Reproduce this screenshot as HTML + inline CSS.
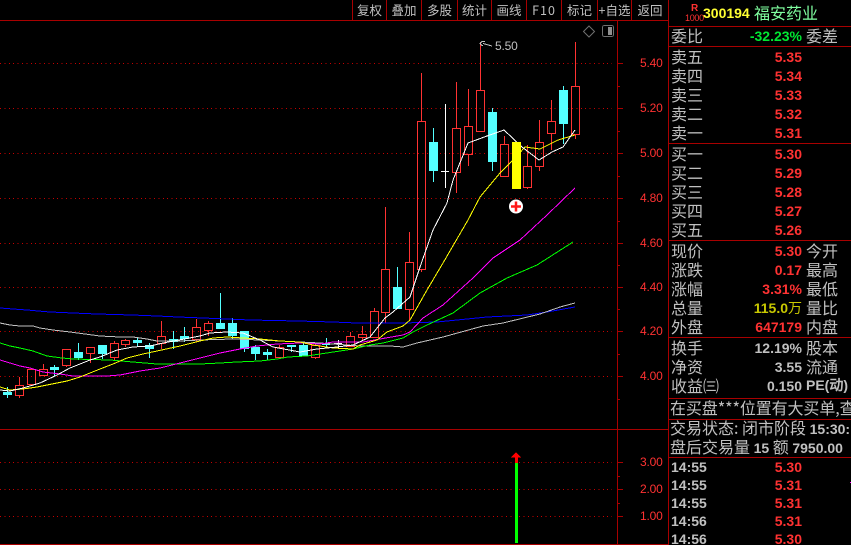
<!DOCTYPE html>
<html><head><meta charset="utf-8"><style>
html,body{margin:0;padding:0;background:#000;width:851px;height:545px;overflow:hidden}
#w{position:relative;width:851px;height:545px;overflow:hidden;font-family:"Liberation Sans","WenQuanYi Zen Hei","Noto Sans CJK SC",sans-serif;color:#c0c0c0}
svg{position:absolute;left:0;top:0}
.t{position:absolute;white-space:nowrap;line-height:20px}
.c{font-size:16px;font-family:"WenQuanYi Zen Hei","Noto Sans CJK SC",sans-serif;left:671px;margin-top:-1px}
.r{font-size:16px;font-family:"WenQuanYi Zen Hei","Noto Sans CJK SC",sans-serif;left:806px;margin-top:-1px}
.n{font-size:14px;font-weight:bold;right:49px;color:#ff3232}
.g{color:#c0c0c0}
.b{font-size:12.5px;font-family:"WenQuanYi Zen Hei","Noto Sans CJK SC",sans-serif;top:0;text-align:center}
.a{font-size:12px;color:#ff3232;left:640px;letter-spacing:-.2px}
.m{font-size:14px;font-weight:bold;left:671px}
</style></head><body><div id="w">
<svg width="851" height="545" viewBox="0 0 851 545" shape-rendering="crispEdges" fill="none">
<g stroke="#c80000" stroke-dasharray="1 3.400">
<path d="M0 63.5H612M0 108.5H612M0 153.5H612M0 198.5H612M0 243.5H612M0 287.5H612M0 331.5H612M0 376.5H612M0 462.5H612M0 489.5H612M0 516.5H612"/>
</g>
<g stroke="#a80000">
<path d="M0 20.5H668M0 429.5H668M0 544.5H668M617.5 20V545M668.5 0V545M668 26.5H851M668 46.5H851M668 143.5H851M668 240.5H851M668 337.5H851M668 398.5H851M668 419.5H851M668 457.5H851"/>
<path d="M352.5 0V20M386.5 0V20M421.5 0V20M457.5 0V20M491.5 0V20M526.5 0V20M561.5 0V20M597.5 0V20M631.5 0V20"/>
<path d="M617 63.5h6M617 108.5h6M617 153.5h6M617 198.5h6M617 243.5h6M617 287.5h6M617 331.5h6M617 376.5h6M617 86.5h3M617 131.5h3M617 176.5h3M617 221.5h3M617 265.5h3M617 309.5h3M617 354.5h3M617 399.5h3M617 462.5h6M617 489.5h6M617 516.5h6M617 476.5h3M617 503.5h3"/>
</g>
<!-- cyan candles -->
<g fill="#54ffff">
<rect x="3" y="392" width="9" height="3"/><rect x="50" y="367" width="9" height="3"/><rect x="74" y="352" width="9" height="6"/><rect x="98" y="345" width="9" height="9"/><rect x="133" y="340" width="9" height="3"/><rect x="145" y="345" width="9" height="4"/><rect x="169" y="339" width="9" height="3"/><rect x="180" y="336" width="9" height="3"/><rect x="216" y="323" width="9" height="6"/><rect x="228" y="323" width="9" height="13"/><rect x="240" y="331" width="9" height="18"/><rect x="251" y="347" width="9" height="7"/><rect x="263" y="352" width="9" height="3"/><rect x="287" y="345" width="9" height="2"/><rect x="299" y="345" width="9" height="11"/><rect x="322" y="343" width="8" height="2"/><rect x="393" y="287" width="9" height="22"/><rect x="429" y="142" width="9" height="29"/><rect x="488" y="112" width="9" height="50"/><rect x="559" y="90" width="9" height="34"/>
</g>
<path stroke="#54ffff" d="M7.5 387V398M54.5 365V376M78.5 343V360M102.5 345V359M137.5 338V347M149.5 343V358M173.5 331V349M184.5 327V342M220.5 293V329M232.5 318V339M244.5 331V352M255.5 345V360M267.5 349V360M291.5 345V352M303.5 343V356M326.5 338V348M397.5 267V309M433.5 128V182M492.5 108V171M563.5 86V144"/>
<!-- red candles -->
<path stroke="#ff3232" d="M15.5 385.5h8v10h-8zM19.5 377v8M19.5 396v2
M27.5 369.5h8v15h-8zM31.5 368v1M31.5 385v1
M39.5 369.5h8v6h-8zM43.5 364v5
M62.5 349.5h8v16h-8zM66.5 366v1
M86.5 347.5h8v6h-8zM90.5 354v9
M110.5 343.5h8v14h-8zM114.5 341v2M114.5 358v2
M121.5 340.5h8v4h-8zM125.5 339v1M125.5 345v2
M157.5 336.5h8v7h-8zM161.5 321v15M161.5 344v5
M192.5 327.5h8v12h-8zM196.5 319v8M196.5 340v2
M204.5 323.5h8v7h-8zM208.5 321v2M208.5 331v5
M275.5 347.5h8v10h-8zM279.5 345v2
M311.5 345.5h8v12h-8zM315.5 343v2M315.5 358v1
M346.5 336.5h8v10h-8zM350.5 332v4
M358.5 334.5h8v3h-8zM362.5 326v8M362.5 338v2
M370.5 311.5h8v26h-8zM374.5 308v3
M381.5 269.5h8v43h-8zM385.5 207v62M385.5 313v10
M405.5 262.5h8v47h-8zM409.5 232v30M409.5 310v10
M417.5 121.5h8v148h-8zM421.5 73v48M421.5 270v2
M452.5 128.5h8v44h-8zM456.5 82v46M456.5 173v20
M464.5 126.5h8v28h-8zM468.5 89v37M468.5 155v11
M476.5 90.5h8v41h-8zM480.5 42v48
M500.5 144.5h8v32h-8zM504.5 136v8
M523.5 166.5h8v21h-8zM527.5 145v21M527.5 188v1
M535.5 142.5h8v24h-8zM539.5 120v22M539.5 167v4
M547.5 121.5h8v12h-8zM551.5 100v21M551.5 134v16
M571.5 86.5h8v48h-8zM575.5 42v44M575.5 135v4"/>
<path stroke="#fff" d="M334 343.5h8M338.5 340v8M441 171.5h8M445.5 104v84"/>
<!-- moving averages -->
<polyline stroke="#0000ff" points="0,308 13,309 27,310 38,311 50,312 73,313 97,314 132,315 157,316 178,317 203,318 227,319 250,320 298,321 333,322 357,323 403,323 437,322 487,317 527,315 547,312 575,307"/>
<polyline stroke="#c0c0c0" points="0,323 10,325 20,326 33,326 40,328 53,330 70,332 85,334 100,336 120,337 133,337 147,339 157,341 180,341 200,340 233,339 260,340 300,342 320,343 360,346 390,346 403,347 417,343 443,337 483,326 503,323 540,314 560,307 575,303"/>
<polyline stroke="#00ff00" points="0,343 10,346 20,348 33,351 47,356 62,358 73,359 110,360 133,362 157,364 200,364 220,363 237,362 260,361 277,359 288,357 307,356 320,354 340,351 353,349 370,345 383,343 403,338 413,332 427,325 453,313 480,293 507,278 537,265 573,242"/>
<polyline stroke="#ff00ff" points="0,360 10,363 20,366 30,368 43,372 60,374 73,376 97,376 107,376 120,375 140,371 160,368 180,363 200,358 220,353 240,349 257,346 277,344 300,343 320,344 333,342 363,342 380,339 403,335 410,332 423,318 443,305 473,278 493,258 520,240 547,215 575,188"/>
<polyline stroke="#ffff00" points="0,387 10,390 23,389 37,387 52,384 67,381 80,377 100,369 113,364 127,358 143,354 157,351 180,346 200,341 213,338 227,337 260,339 280,341 300,342 313,345 333,348 353,349 360,345 377,340 387,332 403,326 410,320 427,290 443,263 468,220 480,197 500,173 513,160 525,147 540,149 558,140 575,135"/>
<polyline stroke="#ffffff" points="0,390 10,391 23,388 40,383 57,375 70,368 90,360 100,357 117,350 133,347 150,346 163,343 200,336 210,333 227,332 243,333 260,340 273,347 300,352 317,349 337,347 353,345 370,337 385,318 393,312 410,297 420,267 433,230 447,203 453,180 468,143 487,136 504,130 522,147 539,160 552,152 563,147 575,130"/>
<rect x="512" y="142" width="9" height="47" fill="#ffff00"/>
<!-- 5.50 marker -->
<path stroke="#c0c0c0" d="M485 41.5h-3l-2 2 2 2h1M483 43.5l9 2.5"/>
<!-- icons -->
<path stroke="#707070" d="M589 26l5.500 5.500L589 37l-5.500-5.500z" shape-rendering="auto"/>
<rect x="602.500" y="25.500" width="11" height="11" rx="2" stroke="#707070" fill="#000"/>
<rect x="608" y="27" width="4" height="8" fill="#909090"/>
<g shape-rendering="auto">
<circle cx="516" cy="206.500" r="7" fill="#fff"/>
<path stroke="#ff1a1a" stroke-width="2.500" d="M511 206.500h10M516 201.500v10"/>
</g>
<!-- bottom bar -->
<rect x="515" y="463" width="3" height="80" fill="#00ff00"/>
<path fill="#ff0000" d="M516 452l5 5.500h-3V463h-3V457.500h-4z"/>
<rect x="850" y="482" width="1" height="1" fill="#ff00ff"/>
</svg>

<span class="t b" style="left:353px;width:33px">复权</span>
<span class="t b" style="left:387px;width:34px">叠加</span>
<span class="t b" style="left:422px;width:35px">多股</span>
<span class="t b" style="left:458px;width:33px">统计</span>
<span class="t b" style="left:492px;width:34px">画线</span>
<span class="t b" style="left:527px;width:34px;letter-spacing:1px">F10</span>
<span class="t b" style="left:562px;width:35px">标记</span>
<span class="t b" style="left:598px;width:33px">+自选</span>
<span class="t b" style="left:632px;width:36px">返回</span>

<span class="t" style="left:495px;top:36px;font-size:12px;color:#c0c0c0;letter-spacing:-.2px">5.50</span>
<span class="t a" style="top:53px">5.40</span>
<span class="t a" style="top:98px">5.20</span>
<span class="t a" style="top:143px">5.00</span>
<span class="t a" style="top:188px">4.80</span>
<span class="t a" style="top:233px">4.60</span>
<span class="t a" style="top:277px">4.40</span>
<span class="t a" style="top:321px">4.20</span>
<span class="t a" style="top:366px">4.00</span>
<span class="t a" style="top:452px">3.00</span>
<span class="t a" style="top:479px">2.00</span>
<span class="t a" style="top:506px">1.00</span>

<span class="t" style="left:691px;top:-1px;font-size:10px;font-weight:bold;color:#ff3232">R</span>
<span class="t" style="left:685px;top:8px;font-size:9px;color:#ff3232;letter-spacing:-.3px">1000</span>
<span class="t" style="left:703px;top:3px;font-size:14px;font-weight:bold;color:#ffff32">300194</span>
<span class="t" style="left:754px;top:2px;font-size:16px;font-family:'WenQuanYi Zen Hei','Noto Sans CJK SC',sans-serif;color:#80ffa0">福安药业</span>

<span class="t c" style="top:26px">委比</span><span class="t n" style="top:26px;color:#00e632">-32.23%</span><span class="t r" style="top:26px">委差</span>

<span class="t c" style="top:47px">卖五</span><span class="t n" style="top:47px">5.35</span>
<span class="t c" style="top:66px">卖四</span><span class="t n" style="top:66px">5.34</span>
<span class="t c" style="top:85px">卖三</span><span class="t n" style="top:85px">5.33</span>
<span class="t c" style="top:104px">卖二</span><span class="t n" style="top:104px">5.32</span>
<span class="t c" style="top:123px">卖一</span><span class="t n" style="top:123px">5.31</span>
<span class="t c" style="top:144px">买一</span><span class="t n" style="top:144px">5.30</span>
<span class="t c" style="top:163px">买二</span><span class="t n" style="top:163px">5.29</span>
<span class="t c" style="top:182px">买三</span><span class="t n" style="top:182px">5.28</span>
<span class="t c" style="top:201px">买四</span><span class="t n" style="top:201px">5.27</span>
<span class="t c" style="top:220px">买五</span><span class="t n" style="top:220px">5.26</span>

<span class="t c" style="top:241px">现价</span><span class="t n" style="top:241px">5.30</span><span class="t r" style="top:241px">今开</span>
<span class="t c" style="top:260px">涨跌</span><span class="t n" style="top:260px">0.17</span><span class="t r" style="top:260px">最高</span>
<span class="t c" style="top:279px">涨幅</span><span class="t n" style="top:279px">3.31%</span><span class="t r" style="top:279px">最低</span>
<span class="t c" style="top:298px">总量</span><span class="t n" style="top:298px;color:#c8c800">115.0<span style="font-weight:normal;font-family:'WenQuanYi Zen Hei','Noto Sans CJK SC',sans-serif">万</span></span><span class="t r" style="top:298px">量比</span>
<span class="t c" style="top:317px">外盘</span><span class="t n" style="top:317px">647179</span><span class="t r" style="top:317px">内盘</span>

<span class="t c" style="top:338px">换手</span><span class="t n g" style="top:338px">12.19%</span><span class="t r" style="top:338px">股本</span>
<span class="t c" style="top:357px">净资</span><span class="t n g" style="top:357px">3.55</span><span class="t r" style="top:357px">流通</span>
<span class="t c" style="top:376px">收益㈢</span><span class="t n g" style="top:376px">0.150</span><span class="t r" style="top:376px;font-weight:bold;font-size:14px;font-family:'Liberation Sans','WenQuanYi Zen Hei',sans-serif">PE(动)</span>

<span class="t c" style="top:398px;left:670px;letter-spacing:-.1px">在买盘***位置有大买单,查</span>
<span class="t c" style="top:418px;left:670px">交易状态: 闭市阶段 <b style="font-family:'Liberation Sans';font-size:14px">15:30:</b></span>
<span class="t c" style="top:437px;left:670px">盘后交易量 <b style="font-family:'Liberation Sans';font-size:14px">15</b> 额 <b style="font-family:'Liberation Sans';font-size:14px">7950.00</b></span>

<span class="t m" style="top:457px">14:55</span><span class="t n" style="top:457px">5.30</span>
<span class="t m" style="top:475px">14:55</span><span class="t n" style="top:475px">5.31</span>
<span class="t m" style="top:493px">14:55</span><span class="t n" style="top:493px">5.31</span>
<span class="t m" style="top:511px">14:56</span><span class="t n" style="top:511px">5.31</span>
<span class="t m" style="top:529px">14:56</span><span class="t n" style="top:529px">5.30</span>
</div></body></html>
